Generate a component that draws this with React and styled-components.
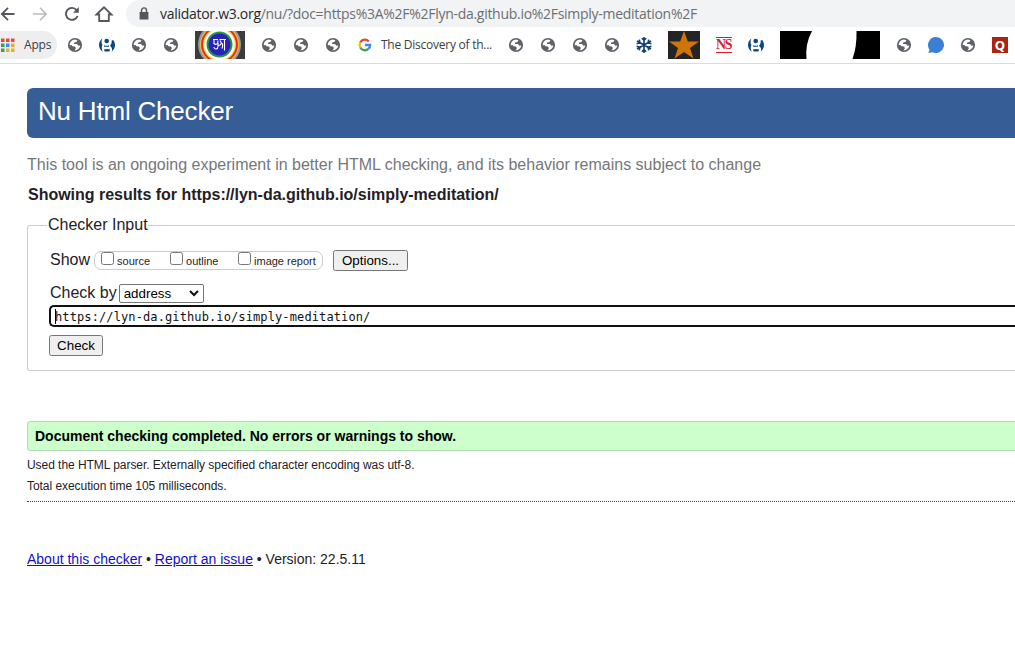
import React from 'react';
import styled, { createGlobalStyle } from 'styled-components';

const Global = createGlobalStyle`
  * { box-sizing: border-box; }
  html, body { margin: 0; background: #fff; overflow: hidden; }
  body { font-family: "Liberation Sans", Arial, sans-serif; color: #1f2126; }
`;

const Window = styled.div`
  width: 1015px;
  height: 649px;
  overflow: hidden;
  white-space: nowrap;
`;

const Toolbar = styled.div`
  display: flex;
  height: 28px;
`;

const NavButtons = styled.div`
  display: flex;
  align-items: center;
  gap: 12px;
  width: 126px;
  height: 27px;
  svg { display: block; flex: none; width: 20px; height: 20px; }
  svg:first-child { margin-left: -2px; }
`;

const AddressBar = styled.div`
  display: flex;
  align-items: center;
  flex: 1;
  height: 27px;
  padding-left: 13px;
  gap: 11px;
  background: #f1f3f4;
  border-radius: 14px 0 0 14px;
  font: 14px/20px "Open Sans", "Segoe UI", sans-serif;
  letter-spacing: -0.285px;
  color: #6b6f74;
  b { font-weight: 400; color: #27292d; }
`;

const Bookmarks = styled.div`
  display: flex;
  align-items: center;
  gap: 16px;
  height: 36px;
  padding-bottom: 2px;
  border-bottom: 1px solid #dadce0;
  font: 12px/16px "Open Sans", "Segoe UI", sans-serif;
  color: #3c4043;
  svg { display: block; flex: none; }
`;

const AppsButton = styled.div`
  display: flex;
  align-items: center;
  gap: 9px;
  width: 57px;
  height: 28px;
  margin-right: -6px;
  background: #eeeeee;
  border-radius: 0 14px 14px 0;
  letter-spacing: -0.2px;
`;

const Bookmark = styled.div`
  display: flex;
  align-items: center;
  gap: 8px;
  width: ${p => p.$width}px;
  letter-spacing: -0.25px;
`;

const NsMark = styled.span`
  flex: none;
  display: flex;
  align-items: center;
  justify-content: center;
  width: 16px;
  height: 16px;
  border: solid #d6202c;
  border-width: 1px 0;
  color: #d6202c;
  font: 700 14px/14px "Liberation Serif", serif;
  letter-spacing: -1.5px;
  padding-right: 1px;
`;

const Page = styled.main`
  padding: 24px 0 0 27px;
`;

const Banner = styled.h1`
  margin: 0;
  height: 50px;
  padding-left: 11px;
  border-radius: 6px 0 0 6px;
  background: #365d95;
  color: #fff;
  font-size: 26px;
  font-weight: 400;
  line-height: 46px;
  letter-spacing: -0.2px;
`;

const Line = styled.p`
  margin: ${p => p.$top || 0}px 0 0;
  padding-left: ${p => p.$indent || 0}px;
  font-size: ${p => p.$size}px;
  font-weight: ${p => (p.$bold ? 700 : 400)};
  line-height: ${p => p.$height}px;
  letter-spacing: ${p => p.$spacing || 0}px;
  color: ${p => p.$color || '#1f2126'};
  a { color: #1010c8; text-decoration: underline; }
`;

const Fieldset = styled.fieldset`
  margin: 11px 0 0;
  height: 155px;
  padding: 14px 0 0 22px;
  border: 1px solid #ccc;
  border-right: 0;
  border-radius: 3px 0 0 3px;
  min-width: 0;
`;

const Legend = styled.legend`
  height: 18px;
  margin-left: -3px;
  padding: 0 0 0 1px;
  font-size: 16px;
  line-height: 18px;
`;

const Row = styled.div`
  display: flex;
  align-items: center;
  height: ${p => p.$height}px;
  margin-left: ${p => p.$shift || 0}px;
  padding-top: ${p => p.$top || 0}px;
  font-size: 16px;
`;

const CheckGroup = styled.div`
  display: flex;
  width: 229px;
  height: 19px;
  margin: 1px 10px 0 4px;
  padding-left: 6px;
  border: 1px solid #ccc;
  border-radius: 7px;
`;

const CheckLabel = styled.label`
  display: flex;
  gap: 3px;
  width: ${p => p.$width}px;
  font-size: 11px;
  line-height: 19px;
`;

const Box = styled.span`
  width: 13px;
  height: 13px;
  border: 1px solid #767676;
  border-radius: 2.5px;
  background: #fff;
`;

const Button = styled.button`
  width: ${p => p.$width}px;
  height: 21px;
  padding: 0;
  border: 1px solid #767676;
  border-radius: 2.5px;
  background: #efefef;
  color: #000;
  font: 13.33px/19px "Liberation Sans", Arial, sans-serif;
`;

const SelectBox = styled.div`
  display: flex;
  align-items: center;
  justify-content: space-between;
  width: 85px;
  height: 19px;
  margin: 1px 0 0 2px;
  padding: 0 4px;
  border: 1px solid #767676;
  border-radius: 2px;
  color: #000;
  font-size: 13.33px;
`;

const UrlField = styled.div`
  display: flex;
  align-items: center;
  height: 22px;
  margin-left: -1px;
  padding: 1px 0 0 4px;
  border: 2px solid #101010;
  border-right: 0;
  border-radius: 5px 0 0 5px;
  color: #111;
  font: 12px/16px "DejaVu Sans Mono", monospace;
  letter-spacing: 0.11px;
`;

const Caret = styled.i`
  width: 1px;
  height: 15px;
  margin-right: -1px;
  background: #000;
`;

const Success = styled.div`
  height: 30px;
  margin-top: 50px;
  padding-left: 7px;
  border: 1px solid #b5d8b5;
  border-right: 0;
  border-radius: 4px 0 0 4px;
  background: #ccffcc;
  color: #000;
  font-size: 14px;
  font-weight: 700;
  line-height: 28px;
`;

const Rule = styled.hr`
  height: 0;
  margin: 4px 0 0;
  border: 0;
  border-top: 1px dotted #444;
`;

const Globe = () => (
  <svg width="16" height="16" viewBox="0 0 16 16">
    <circle cx="8" cy="8" r="7.1" fill="#5f6368" />
    <path fill="#fff" d="M2.7 8.2C2.7 5 5 2.9 8 2.6L10.4 3.2 9.4 4.9 7.3 5.5 6.9 7H10L11.4 8.7 13.3 8.6C12.9 11.4 10.6 13.4 7.4 13.4L8.9 11.3 8 9.5 5.6 9.3 4.5 8Z" />
  </svg>
);

const GovMark = () => (
  <svg width="16" height="16" viewBox="0 0 16 16">
    <path fill="#0b4a7d" d="M3.4 1.4C2.2 4 2.4 6 3.4 8C2.4 9.6 2.6 12.3 3.9 14.8C1.5 13.4 0 10.900 0 8C0 5.100 1.300 2.800 3.400 1.400ZM12.600 3.600L14.200 3C15.300 4.500 16 6.100 16 8C16 10.700 14.700 13.100 12.700 14.500C13.800 12 12.800 9.900 11 8.900C12.400 7.400 13 5.400 12.600 3.600Z" />
    <circle cx="7.700" cy="4" r="2.300" fill="#0b4a7d" />
    <path fill="#0b4a7d" d="M5 8.200Q7.500 9.200 10 8.200V9.700H5ZM4.800 12.400Q8 11.600 11.200 12.400L10.300 14.400H5.800Z" />
  </svg>
);

const dots = ['#e24a3b', '#e24a3b', '#e24a3b', '#34a05a', '#4285f4', '#e8b024', '#34a05a', '#e8b024', '#e8b024'];

export default function App() {
  return (
    <Window>
      <Global />
      <Toolbar>
        <NavButtons>
          <svg viewBox="0 0 20 20" fill="none" stroke="#54575b" strokeWidth="1.8"><path d="M16.5 10H4M10 3.8 3.8 10 10 16.2" /></svg>
          <svg viewBox="0 0 20 20" fill="none" stroke="#b9bbbe" strokeWidth="1.6"><path d="M3 10H16M10 3.8 16.2 10 10 16.2" /></svg>
          <svg viewBox="0 0 20 20" fill="none" stroke="#54575b" strokeWidth="1.9"><path d="M15.6 12A6 6 0 1 1 14.6 6" /><path d="M16.8 3V8.8H11Z" fill="#54575b" stroke="none" /></svg>
          <svg viewBox="0 0 20 20" fill="none" stroke="#54575b" strokeWidth="1.8"><path d="M2.5 10.5 10 3.3 17.5 10.5H14.8V17H5.2V10.5Z" /></svg>
        </NavButtons>
        <AddressBar>
          <svg width="10" height="14" viewBox="0 0 10 14"><path fill="#54575b" d="M0.6 5H9.4V12.5H0.6Z" /><path fill="none" stroke="#54575b" strokeWidth="1.4" d="M2.5 6V3.4A2.5 2.5 0 0 1 7.5 3.4V6" /></svg>
          <span><b>validator.w3.org</b>/nu/?doc=https%3A%2F%2Flyn-da.github.io%2Fsimply-meditation%2F</span>
        </AddressBar>
      </Toolbar>
      <Bookmarks>
        <AppsButton>
          <svg width="15" height="14" viewBox="0 0 15 14">
            {dots.map((c, i) => <rect key={i} x={1 + (i % 3) * 5} y={0.5 + Math.floor(i / 3) * 5} width="3.5" height="3.5" fill={c} />)}
          </svg>
          Apps
        </AppsButton>
        <Globe /><GovMark /><Globe /><Globe />
        <svg width="50" height="28" viewBox="0 0 50 28">
          <rect width="50" height="28" fill="#3c3b3d" />
          <circle cx="24.5" cy="13.5" r="21.5" fill="#9c989f" />
          <circle cx="24.5" cy="13.5" r="19.5" fill="#f0c52d" />
          <circle cx="24.5" cy="13.5" r="18.5" fill="#dc2f28" />
          <circle cx="24.5" cy="13.5" r="16.5" fill="#f5d540" />
          <circle cx="24.5" cy="13.5" r="15.2" fill="#fff" />
          <circle cx="24.5" cy="13.5" r="13" fill="#2d9446" />
          <circle cx="24.5" cy="13.5" r="11" fill="#2825b5" />
          <path fill="none" stroke="#fff" strokeWidth="1.1" d="M18 8.5H23M24.5 8.500H31M19 9V12.500Q21 14.500 22.800 12V9.500M18.800 16C19.500 19 23 18.500 23 15.500V12M23 14Q25.500 15 26.500 12L25 9.500M26.500 12Q28.500 12.500 27 17.500M29.500 19.500V9" />
        </svg>
        <Globe /><Globe /><Globe />
        <Bookmark $width={135}>
          <svg width="16" height="16" viewBox="0 0 16 16" fill="none" strokeWidth="2.3">
            <path stroke="#ea4335" d="M3.2 5.4A5.2 5.2 0 0 1 11.8 4.4" />
            <path stroke="#fbbc05" d="M3.2 5.4A5.2 5.2 0 0 0 3.3 10.4" />
            <path stroke="#34a853" d="M3.3 10.4A5.2 5.2 0 0 0 11.4 11.9" />
            <path stroke="#4285f4" d="M11.4 11.9A5 5 0 0 0 13.1 8H8" />
          </svg>
          The Discovery of th...
        </Bookmark>
        <Globe /><Globe /><Globe /><Globe />
        <svg width="16" height="16" viewBox="0 0 16 16" fill="none" stroke="#123f72" strokeWidth="1.6"><path d="M8 0V16M1 4 15 12M15 4 1 12M5.800 1.200 8 3.400 10.200 1.200M5.800 14.800 8 12.600 10.200 14.800M.6 6.800 3.900 5.700 3.300 2.600M15.400 9.200 12.100 10.300 12.700 13.400M15.400 6.800 12.100 5.700 12.700 2.600M.6 9.200 3.900 10.300 3.300 13.400" /></svg>
        <svg width="32" height="28" viewBox="0 0 32 28"><rect width="32" height="28" fill="#242426" /><path fill="#cf7508" d="M16 0 19.8 10.6H31L22 17 25.5 27.5 16 21 6.5 27.5 10 17 1 10.6H12.2Z" /></svg>
        <NsMark>NS</NsMark>
        <GovMark />
        <svg width="100" height="28" viewBox="0 0 100 28"><rect width="100" height="28" /><path fill="#fff" d="M32 0H76.5Q77 15 72.5 28H26.5Q25 13 32 0Z" /></svg>
        <Globe />
        <svg width="16" height="16" viewBox="0 0 16 16"><path fill="#3a7fd5" d="M8 0A8 8 0 1 1 4.5 15.2L.3 16 1.6 12.7A8 8 0 0 1 8 0Z" /></svg>
        <Globe />
        <svg width="16" height="16" viewBox="0 0 16 16"><rect width="16" height="16" fill="#a82612" /><text x="8" y="12.5" textAnchor="middle" fill="#fff" fontFamily="Open Sans" fontWeight="700" fontSize="13">Q</text></svg>
      </Bookmarks>
      <Page>
        <Banner>Nu Html Checker</Banner>
        <Line $size={16} $height={20} $top={17} $color="#76777a">This tool is an ongoing experiment in better HTML checking, and its behavior remains subject to change</Line>
        <Line $size={16} $height={20} $top={10} $indent={1} $spacing={-0.02} $bold>Showing results for https://lyn-da.github.io/simply-meditation/</Line>
        <Fieldset>
          <Legend>Checker Input</Legend>
          <Row $height={24}>
            <span>Show</span>
            <CheckGroup>
              <CheckLabel $width={69}><Box />source</CheckLabel>
              <CheckLabel $width={68}><Box />outline</CheckLabel>
              <CheckLabel $width={80}><Box />image report</CheckLabel>
            </CheckGroup>
            <Button $width={75}>Options...</Button>
          </Row>
          <Row $height={33} $top={8}>
            <span>Check by</span>
            <SelectBox>address
              <svg width="10" height="8" viewBox="0 0 10 8" fill="none" stroke="#111" strokeWidth="2"><path d="M1 2 5 6 9 2" /></svg>
            </SelectBox>
          </Row>
          <UrlField><Caret />https://lyn-da.github.io/simply-meditation/</UrlField>
          <Row $height={37} $shift={-1}><Button $width={54}>Check</Button></Row>
        </Fieldset>
        <Success>Document checking completed. No errors or warnings to show.</Success>
        <Line $size={12} $height={21} $top={4} $spacing={-0.05}>Used the HTML parser. Externally specified character encoding was utf-8.</Line>
        <Line $size={12} $height={21} $spacing={-0.05}>Total execution time 105 milliseconds.</Line>
        <Rule />
        <Line $size={14} $height={20} $top={47}><a>About this checker</a> • <a>Report an issue</a> • Version: 22.5.11</Line>
      </Page>
    </Window>
  );
}
